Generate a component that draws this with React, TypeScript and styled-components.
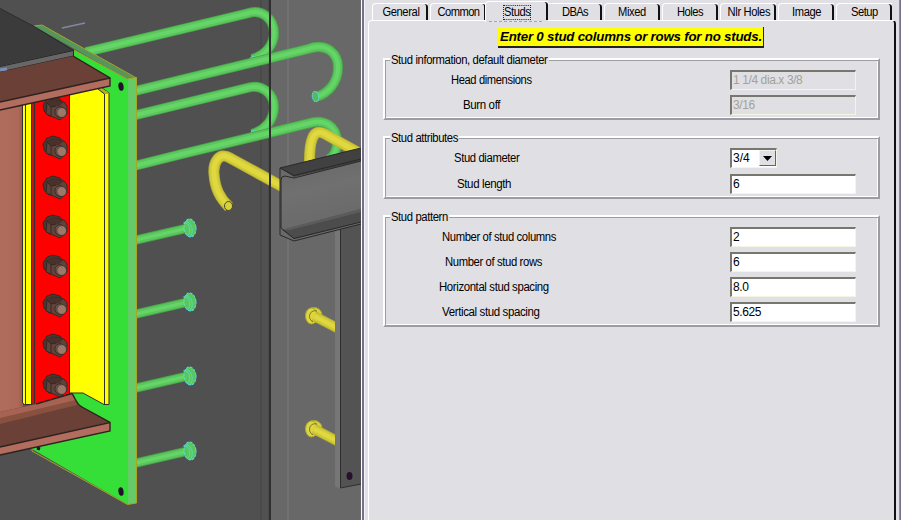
import React from "react";
import styled, { createGlobalStyle } from "styled-components";

const Global = createGlobalStyle`
  * { box-sizing: border-box; }
  body { margin: 0; overflow: hidden; background: #e0dfe4; }
`;

const face = "#e0dfe4";

const Window = styled.div`
  display: flex;
  width: 901px;
  height: 520px;
  overflow: hidden;
  background: ${face};
  color: #000;
  font: 12px/14px "Liberation Sans", Arial, sans-serif;
  letter-spacing: -0.4px;
`;

const Viewport = styled.div`
  width: 361px;
  height: 520px;
  flex: none;
  background: #505050;
  svg { display: block; }
`;

const Splitter = styled.div`
  width: 4px;
  flex: none;
  background: linear-gradient(90deg, #fff 0 1px, #74718c 1px 3px, #f4f3f8 3px 4px);
`;

const Dialog = styled.div`
  display: flex;
  flex-direction: column;
  width: 534px;
  flex: none;
  padding: 1px 3px 0 3px;
`;

const RightEdge = styled.div`
  width: 2px;
  flex: none;
  background: linear-gradient(90deg, #8f8da6 0 1px, #74718c 1px 2px);
`;

const TabStrip = styled.div`
  display: flex;
  align-items: flex-end;
  height: 19px;
  flex: none;
  padding-left: 4px;
`;

const Tab = styled.button<{ $active?: boolean }>`
  display: flex;
  justify-content: center;
  align-items: center;
  position: relative;
  height: ${(p) => (p.$active ? 21 : 17)}px;
  width: ${(p) => (p.$active ? 63 : 56)}px;
  margin: ${(p) => (p.$active ? "0 -2px -2px -3px" : "0 2px 0 0")};
  flex: none;
  padding: ${(p) => (p.$active ? "2px 0 1px" : "1px 0 0")};
  border: 0 solid #fff;
  border-width: 1px 0 0 1px;
  border-top-left-radius: 4px;
  background: ${face};
  font: inherit;
  color: inherit;
  z-index: ${(p) => (p.$active ? 2 : 1)};

  &::after {
    content: "";
    position: absolute;
    right: 0;
    top: 0;
    width: 4px;
    bottom: ${(p) => (p.$active ? 2 : 0)}px;
    border-right: 2px solid #111;
    border-top-right-radius: 4px 3px;
  }

  &::before {
    content: "";
    display: ${(p) => (p.$active ? "block" : "none")};
    position: absolute;
    left: 3px;
    right: 5px;
    bottom: 0;
    height: 1px;
    background: repeating-linear-gradient(90deg, #a5a4aa 0 3px, #e9e8ed 3px 5px);
  }
`;

const TabText = styled.span<{ $focus?: boolean; $ls: number }>`
  letter-spacing: ${(p) => p.$ls}px;
  transform: scaleX(0.93);
  outline: ${(p) => (p.$focus ? "1px dotted #222" : "none")};
  line-height: 13px;
  white-space: nowrap;
`;

const Page = styled.div`
  display: flex;
  flex-direction: column;
  flex: 1;
  padding: 6px 15px 0 14px;
  border: solid #fff;
  border-width: 1px 0 0 1px;
  border-right: 2px solid #111;
  border-radius: 4px 4px 0 0;
`;

const Banner = styled.div`
  width: 266px;
  height: 21px;
  margin: 0 0 10px 115px;
  padding-left: 2px;
  border: solid #222;
  border-width: 0 1px 2px 0;
  background: #ffff00;
  font: italic bold 13.3px/20px "Liberation Sans", Arial, sans-serif;
  letter-spacing: -0.22px;
  white-space: nowrap;
`;

const Group = styled.fieldset<{ $height: number; $gap: number }>`
  display: flex;
  flex-direction: column;
  min-width: 0;
  width: 497px;
  height: ${(p) => p.$height}px;
  flex: none;
  margin: 0 0 ${(p) => p.$gap}px;
  padding: 0;
  border: solid;
  border-width: 2px;
  border-color: #fff #9d9ca2 #9d9ca2 #fff;
  box-shadow: inset 1px 1px 0 #9d9ca2, inset -1px -1px 0 #fff;
`;

const Caption = styled.div`
  align-self: flex-start;
  height: 14px;
  margin: -7px 0 0 5px;
  padding: 0 1px;
  background: ${face};
  transform: scaleX(0.94);
  transform-origin: left center;
  white-space: nowrap;
`;

const Row = styled.div<{ $indent: number; $top: number }>`
  display: grid;
  grid-template-columns: ${(p) => 345 - p.$indent}px auto;
  justify-content: start;
  align-items: center;
  height: 20px;
  flex: none;
  margin: ${(p) => p.$top}px 0 0 ${(p) => p.$indent}px;
`;

const Label = styled.label<{ $stretch: number }>`
  justify-self: start;
  transform: scaleX(${(p) => p.$stretch});
  transform-origin: left center;
  white-space: nowrap;
`;

const Field = styled.input`
  width: 126px;
  height: 20px;
  padding: 0 0 1px 1px;
  border: solid;
  border-width: 2px 1px 1px 2px;
  border-color: #77776f #f5f5e6 #f5f5e6 #77776f;
  border-radius: 0;
  outline: none;
  background: #fff;
  color: #000;
  font: inherit;
  letter-spacing: -0.4px;
  &:disabled { background: ${face}; color: #a3a296; }
`;

const Combo = styled.div`
  display: flex;
  justify-content: space-between;
  width: 47px;
  height: 20px;
  padding-left: 1px;
  border: solid;
  border-width: 2px 1px 1px 2px;
  border-color: #77776f #f5f5e6 #f5f5e6 #77776f;
  background: #fff;
  line-height: 16px;
  letter-spacing: 0;
`;

const DropButton = styled.span`
  display: flex;
  align-items: center;
  justify-content: center;
  width: 17px;
  height: 16px;
  border: 1px solid;
  border-color: #f2f2f2 #66655f #66655f #f2f2f2;
  background: ${face};
`;

const tabs: [string, number][] = [
  ["General", -0.4], ["Common", -0.6], ["Studs", -0.45], ["DBAs", -0.7], ["Mixed", -0.4],
  ["Holes", -0.5], ["Nlr Holes", -0.4], ["Image", -0.45], ["Setup", -0.5],
];

type FieldRow = { label: string; value: string; indent: number; top: number; combo?: boolean; disabled?: boolean; stretch?: number };
type GroupData = { caption: string; height: number; gap: number; rows: FieldRow[] };

const groups: GroupData[] = [
  {
    caption: "Stud information, default diameter", height: 62, gap: 16,
    rows: [
      { label: "Head dimensions", value: "1 1/4 dia.x 3/8", indent: 66, top: 3, disabled: true, stretch: 0.93 },
      { label: "Burn off", value: "3/16", indent: 78, top: 5, disabled: true, stretch: 0.96 },
    ],
  },
  {
    caption: "Stud attributes", height: 63, gap: 16,
    rows: [
      { label: "Stud diameter", value: "3/4", indent: 69, top: 3, combo: true },
      { label: "Stud length", value: "6", indent: 72, top: 6, stretch: 0.96 },
    ],
  },
  {
    caption: "Stud pattern", height: 112, gap: 0,
    rows: [
      { label: "Number of stud columns", value: "2", indent: 57, top: 3 },
      { label: "Number of stud rows", value: "6", indent: 60, top: 5 },
      { label: "Horizontal stud spacing", value: "8.0", indent: 54, top: 5, stretch: 0.95 },
      { label: "Vertical stud spacing", value: "5.625", indent: 57, top: 5, stretch: 0.96 },
    ],
  },
];

/** A round bar: a dark edge stroke with lighter strokes inside it. */
function Bar({ d, tone, width = 10 }: { d: string; tone: "green" | "yellow"; width?: number }) {
  const [edge, body, light] = tone === "green" ? ["#48a84a", "#5bc65d", "#66d568"] : ["#b9b22f", "#d2cb39", "#dfd83f"];
  return (
    <g fill="none" strokeLinejoin="round">
      <path d={d} stroke={edge} strokeWidth={width} />
      <path d={d} stroke={body} strokeWidth={width - 2} />
      <path d={d} stroke={light} strokeWidth={width - 6} />
    </g>
  );
}

function Bolt({ y }: { y: number }) {
  return (
    <g transform={`translate(43 ${y})`} stroke="#2d2321" strokeWidth="0.8" strokeLinejoin="round">
      <path d="M4 2 L10 0 L17 2 L20 6 L14 19 L6 19 L1 14 L0 8 Z" fill="#493630" />
      <path d="M4 6 L10 3 L21 5 L24 9 V17 L17 23 L8 19 L3 17 Z" fill="#5f443b" />
      <path d="M4 6 L10 3 L21 5 L16 9 L8 10 Z" fill="#48322b" stroke="none" />
      <path d="M4 6 L8 10 V19 M8 10 L13 9" fill="none" />
      <ellipse cx="17" cy="15" rx="5" ry="5.3" fill="#7a5a4f" />
      <ellipse cx="18.7" cy="15.5" rx="4.8" ry="4.9" fill="#9c7869" strokeWidth="0.6" />
    </g>
  );
}

function GreenStud({ y }: { y: number }) {
  return (
    <g>
      <Bar d={`M136 ${y + 12} L188 ${y}`} tone="green" width={9} />
      <ellipse cx="190" cy={y} rx="6" ry="9" fill="#59c85c" stroke="#5bdad6" strokeDasharray="3 1" transform={`rotate(-6 190 ${y})`} />
      <path d={`M183 ${y - 5} C190 ${y - 7} 192 ${y + 5} 187 ${y + 8} M186 ${y - 7} C194 ${y - 4} 193 ${y + 6} 190 ${y + 9}`} fill="none" stroke="#5bdad6" strokeWidth="0.8" />
    </g>
  );
}

function YellowStud({ y }: { y: number }) {
  return (
    <g>
      <ellipse cx="314" cy={y - 1} rx="8" ry="7.5" fill="#d8d13c" stroke="#aaa52f" />
      <ellipse cx="311.5" cy={y} rx="6" ry="8" fill="#ddd63d" stroke="#aaa52f" />
      <Bar d={`M314 ${y} L341 ${y + 14}`} tone="yellow" width={10} />
      <path d={`M317 ${y - 5} C309 ${y - 7} 307 ${y + 3} 313 ${y + 6}`} fill="none" stroke="#5f5c2d" strokeWidth="0.8" />
    </g>
  );
}

function Scene() {
  return (
    <svg width="361" height="520" viewBox="0 0 361 520">
      <defs>
        <linearGradient id="web" x1="0" y1="0" x2="1" y2="0">
          <stop offset="0" stopColor="#af6c5c" />
          <stop offset="0.8" stopColor="#ad6858" />
          <stop offset="1" stopColor="#985a4c" />
        </linearGradient>
        <linearGradient id="channel" x1="0" y1="0" x2="0.2" y2="1">
          <stop offset="0" stopColor="#636363" />
          <stop offset="0.5" stopColor="#707070" />
          <stop offset="1" stopColor="#686868" />
        </linearGradient>
      </defs>

      <rect width="270" height="520" fill="#505050" />
      <rect x="260" width="9" height="520" fill="#4a4a4a" />
      <rect x="262" width="6" height="520" fill="#515151" />
      <rect x="270" width="91" height="520" fill="#686868" />
      <rect x="287" width="2" height="520" fill="#717171" />

      <Bar d="M86 52 L247 13.5 C262 8 274 19 274 33 C274 46 264 56 252 59" tone="green" />
      <path d="M249 60 l2 -3 h4" fill="none" stroke="#5bdad6" />
      <Bar d="M86 103 L180 80 L308 49 C327 42 338 54 338 67 C338 82 329 93 316 97" tone="green" />
      <ellipse cx="315.5" cy="96.5" rx="3.2" ry="5.2" fill="#59b95a" stroke="#5bdad6" strokeDasharray="2 0.6" transform="rotate(-10 315.5 96.5)" />
      <Bar d="M136 115 L247 88 C262 83 274 94 274 107 C274 120 265 130 252 134" tone="green" />
      <path d="M250 134 l2 -3 h4" fill="none" stroke="#5bdad6" />
      <Bar d="M136 165.5 L180 154.5 L308 123.5 C324 118 337 126 337 142 C337 151 333 157 328 160" tone="green" />

      <Bar d="M283 187 L230 158 C219 151 213 163 214 174 C215 189 220 198 229 207" tone="yellow" width={11} />
      <ellipse cx="228.5" cy="206" rx="4" ry="4.5" fill="#d8d13c" stroke="#4a4a2c" />
      <Bar d="M361 154 L325 134 C313 127 309 141 309.5 165" tone="yellow" width={11} />

      <rect x="269" width="2" height="520" fill="#303030" />

      <YellowStud y={316} />
      <YellowStud y={429} />

      <path d="M335 225 H340 V489 L335 486 Z" fill="#767676" />
      <path d="M340 223 H361 V484 L340 488 Z" fill="#535353" />
      <path d="M340.5 223 V488 L361 484" fill="none" stroke="#2e2e2e" />
      <ellipse cx="349.5" cy="476" rx="3" ry="4" fill="#27112a" />

      <path d="M280 168 L361 148 V224 L294 241 L280 235 Z" fill="url(#channel)" />
      <path d="M280 168 L361 148 V161 L294 177 Z" fill="#414141" />
      <path d="M282 230 L361 209 V222 L294 239 Z" fill="#4c4c4c" />
      <path d="M282 230 L361 209 V212 L290 230 Z" fill="#5c5c5c" />
      <path d="M361 148 L280 168 V235 L294 241 L361 224 M280 168 L294 175.5 L361 159 M361 161 L294 178 L285 176 Q281 176 281 180 V228 L294 238.5 L361 222" fill="none" stroke="#292929" />

      <GreenStud y={228} />
      <GreenStud y={302} />
      <GreenStud y={376} />
      <GreenStud y={451} />

      <path d="M62 28 L85 23" stroke="#8388a0" strokeWidth="1.5" />

      <path d="M74 50 L127 79 V504 L32 449 V100 H74 Z" fill="#36df37" />
      <path d="M34 26 L42 25 L136 78 L127 79 Z" fill="#56965a" />
      <path d="M127 79 L136.5 77.5 V503 L127 504.5 Z" fill="#64cb66" />
      <path d="M74 50 L127 79 M34 26 L42 25 L136.5 78 M127.5 79 L136.5 77.5 V503 L127.5 504.5 L32 451 V447 M127.5 79 V504" fill="none" stroke="#a9a526" />
      <ellipse cx="121" cy="86.5" rx="2.6" ry="4.3" fill="#23102a" transform="rotate(-8 121 86.5)" />
      <ellipse cx="121" cy="491.5" rx="2.6" ry="4.3" fill="#23102a" transform="rotate(-8 121 491.5)" />

      <path d="M0 103 H23 V430 H0 Z" fill="url(#web)" />
      <path d="M22.5 100 H32 V404.5 H24.5 L22.5 403 Z" fill="#ff0" stroke="#303030" />
      <path d="M25.5 100 V404" stroke="#303030" />
      <path d="M32 97 L70 88 V394 L36 404.5 H32 Z" fill="#f00" />
      <path d="M31.5 97 H34 V404 H31.5 Z" fill="#c4130c" />
      <path d="M31.5 97 V404.5 H37 L70 394 M34.5 97 V404" fill="none" stroke="#353030" />
      <path d="M69.5 85 H98 L109 93 V404.5 H104 L83 393 H69.5 Z" fill="#ff0" stroke="#303030" />
      <path d="M98 89 L104 94 H109 L108 92 L101 88 Z" fill="#b7ad14" />
      <path d="M98 89 L104.5 94 V404" fill="none" stroke="#303030" />
      {[97, 136, 176, 215, 255, 294, 334, 374].map((y) => <Bolt key={y} y={y} />)}

      <path d="M0 9 L34 27 L73.5 50 L0 66 Z" fill="#3b3b3b" />
      <path d="M0 66 L73.5 50.5 V56 L0 72 Z" fill="#676767" />
      <path d="M0 8.5 L34 26.5 L73.5 50.5 L0 66.5 M73.5 50 V56 L0 72" fill="none" stroke="#282828" />
      <path d="M0 70 L7 69" stroke="#7990ba" strokeWidth="3" />
      <path d="M0 72 L73.5 56 L110 78 L0 102 Z" fill="#6b4036" />
      <path d="M0 102 L110 78 V86 L0 110 Z" fill="#b26d5e" />
      <path d="M73 56 L110 78 V86 L0 110 M0 102 L110 78" fill="none" stroke="#2e2220" strokeWidth="1.4" />

      <path d="M0 412 L36 404 L72 393.5 C76 399 76 404 82 407 L110 422 L0 447 Z" fill="#6b4036" />
      <path d="M0 412 L36 404 L72 393.5 L76 401 L0 420 Z" fill="#a66252" />
      <path d="M0 418 L76 400 L77 405 L0 424 Z" fill="#87503f" />
      <path d="M0 447 L110 422 V431 L0 455 Z" fill="#b26d5e" />
      <path d="M72 393.5 C76 399 76 404 82 407 L110 422.5 V431 L0 455 M0 447 L110 422.5 M36 404 L72 393.5" fill="none" stroke="#2e2220" strokeWidth="1.4" />
      <path d="M37 448 l3 1" stroke="#23102a" strokeWidth="3" />
    </svg>
  );
}

export default function App() {
  return (
    <>
      <Global />
      <Window>
        <Viewport><Scene /></Viewport>
        <Splitter />
        <Dialog>
          <TabStrip>
            {tabs.map(([name, ls]) => (
              <Tab key={name} $active={name === "Studs"}>
                <TabText $ls={ls} $focus={name === "Studs"}>{name}</TabText>
              </Tab>
            ))}
          </TabStrip>
          <Page>
            <Banner>Enter 0 stud columns or rows for no studs.</Banner>
            {groups.map((g) => (
              <Group key={g.caption} $height={g.height} $gap={g.gap}>
                <Caption>{g.caption}</Caption>
                {g.rows.map((r) => (
                  <Row key={r.label} $indent={r.indent} $top={r.top}>
                    <Label $stretch={r.stretch ?? 0.94}>{r.label}</Label>
                    {r.combo ? (
                      <Combo>
                        {r.value}
                        <DropButton>
                          <svg width="9" height="5" viewBox="0 0 9 5"><path d="M0 0 H9 L4.5 5 Z" /></svg>
                        </DropButton>
                      </Combo>
                    ) : (
                      <Field defaultValue={r.value} disabled={r.disabled} />
                    )}
                  </Row>
                ))}
              </Group>
            ))}
          </Page>
        </Dialog>
        <RightEdge />
      </Window>
    </>
  );
}
